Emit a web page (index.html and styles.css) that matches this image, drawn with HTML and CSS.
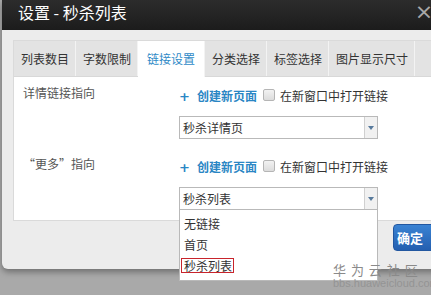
FILE: index.html
```html
<!DOCTYPE html>
<html lang="zh-CN">
<head>
    <meta charset="UTF-8">
    <title>设置 - 秒杀列表</title>
    <link rel="stylesheet" href="styles.css">
</head>
<body>
    <div class="modal">
        <div class="modal-head">
            <span class="modal-title">设置 - 秒杀列表</span>
            <span class="modal-close">×</span>
        </div>
        <div class="modal-body">
            <div class="panel">
                <ul class="tabs">
                    <li>列表数目</li>
                    <li>字数限制</li>
                    <li class="active">链接设置</li>
                    <li>分类选择</li>
                    <li>标签选择</li>
                    <li>图片显示尺寸</li>
                </ul>
                <div class="form">
                    <div class="row">
                        <div class="row-label">详情链接指向</div>
                        <div class="row-field">
                            <div class="actions">
                                <a class="create-link"><span class="plus">+</span>创建新页面</a>
                                <label class="check"><span class="box"></span>在新窗口中打开链接</label>
                            </div>
                            <div class="select">
                                <span class="select-value">秒杀详情页</span>
                                <span class="select-arrow"></span>
                            </div>
                        </div>
                    </div>
                    <div class="row">
                        <div class="row-label">“更多”指向</div>
                        <div class="row-field">
                            <div class="actions">
                                <a class="create-link"><span class="plus">+</span>创建新页面</a>
                                <label class="check"><span class="box"></span>在新窗口中打开链接</label>
                            </div>
                            <div class="select open">
                                <span class="select-value">秒杀列表</span>
                                <span class="select-arrow"></span>
                                <ul class="select-menu">
                                    <li>无链接</li>
                                    <li>首页</li>
                                    <li><span class="marked">秒杀列表</span></li>
                                </ul>
                            </div>
                        </div>
                    </div>
                </div>
            </div>
        </div>
        <div class="modal-foot">
            <button class="btn-primary">确定</button>
        </div>
    </div>

    <div class="watermark">
        <div class="wm-name">华 为 云 社 区</div>
        <div class="wm-url">bbs.huaweicloud.com</div>
    </div>
</body>
</html>
```

FILE: styles.css
```css
body {
    margin: 0;
    height: 295px;
    overflow: hidden;
    background-color: #a9a9a9;
    font-family: "Noto Sans CJK SC", "Noto Sans", sans-serif;
    font-size: 12px;
    color: #333;
    position: relative;
}
.modal {
    width: 450px;
    margin-left: 2px;
    background-color: #ececec;
    border-radius: 0 0 6px 6px;
    box-shadow: 0 3px 6px rgba(0,0,0,0.35);
}
.modal-head {
    height: 30px;
    background: linear-gradient(#2c2c2c, #1c1c1c);
    display: flex;
    align-items: center;
    padding-left: 16px;
    color: #fff;
}
.modal-title {
    font-size: 16px;
    line-height: 20px;
    margin-top: -6px;
}
.modal-close {
    margin-left: 288px;
    margin-top: -6px;
    font-size: 22px;
    line-height: 20px;
    color: #a8a8a8;
    font-family: "DejaVu Sans", sans-serif;
}
.modal-body {
    padding: 10px 11px 0 11px;
}
.panel {
    background-color: #fff;
    border: 1px solid #dadada;
}
.tabs {
    list-style: none;
    margin: 0;
    padding: 0;
    display: flex;
    height: 35px;
    background-color: #e3e3e3;
    border-bottom: 1px solid #d8d8d8;
}
.tabs li {
    padding: 0 6px 0 7px;
    line-height: 35px;
    font-size: 12px;
    color: #333;
    border-right: 1px solid #f3f3f3;
}
.tabs li.active {
    background-color: #fff;
    color: #2f8ac7;
    padding: 0 9px 0 9px;
    height: 36px;
}
.form {
    padding: 8px 0 10px 9px;
}
.row {
    display: flex;
}
.row + .row {
    margin-top: 17px;
}
.row-label {
    width: 156px;
    line-height: 16px;
    color: #555;
}
.row-field {
    width: 199px;
}
.actions {
    display: flex;
    align-items: center;
    height: 20px;
    white-space: nowrap;
}
.create-link {
    color: #2a86c4;
    font-weight: bold;
    margin-right: 6px;
}
.plus {
    font-family: "DejaVu Sans", sans-serif;
    font-size: 13px;
    margin-right: 7px;
}
.check {
    display: flex;
    align-items: center;
    color: #333;
}
.box {
    width: 10px;
    height: 10px;
    border: 1px solid #b5b5b5;
    border-radius: 2px;
    background: linear-gradient(#f2f2f2, #dcdcdc);
    margin-right: 5px;
}
.select {
    position: relative;
    margin-top: 11px;
    height: 21px;
    border: 1px solid #b9b9b9;
    display: flex;
    background-color: #fff;
}
.select-value {
    flex: 1;
    line-height: 21px;
    padding-left: 3px;
    color: #333;
}
.select-arrow {
    width: 12px;
    border-left: 1px solid #d0d0d0;
    background-color: #f1f1f1;
    position: relative;
}
.select-arrow::after {
    content: "";
    position: absolute;
    left: 3px;
    top: 9px;
    border-top: 4px solid #587a9c;
    border-left: 3px solid transparent;
    border-right: 3px solid transparent;
}
.select-menu {
    position: absolute;
    left: -1px;
    top: 22px;
    width: 197px;
    margin: 0;
    padding: 3px 0 4px 0;
    list-style: none;
    background-color: #fff;
    border: 1px solid #b9b9b9;
    border-top: none;
    z-index: 2;
}
.select-menu li {
    height: 21px;
    line-height: 21px;
    padding-left: 4px;
    color: #333;
}
.marked {
    display: inline-block;
    margin-left: -3px;
    padding: 0 1px 0 2px;
    line-height: 13px;
    border: 1px solid #c8242c;
}
.modal-foot {
    height: 48px;
    display: flex;
    justify-content: flex-end;
    align-items: flex-start;
    padding-right: 8px;
}
.btn-primary {
    margin-top: 3px;
    width: 51px;
    height: 27px;
    border: 1px solid #2257a0;
    border-radius: 4px;
    background: linear-gradient(#3a83d3, #245fb0);
    color: #fff;
    font-family: inherit;
    font-size: 13px;
    font-weight: bold;
    padding: 0 0 0 3px;
    text-align: left;
}
.watermark {
    position: absolute;
    left: 333px;
    top: 262px;
    z-index: 3;
    color: #8a8a8a;
}
.wm-name {
    font-size: 13px;
    line-height: 15px;
    letter-spacing: 1px;
}
.wm-url {
    font-family: "Liberation Sans", sans-serif;
    font-size: 11px;
    line-height: 12px;
    color: #949494;
}
```
